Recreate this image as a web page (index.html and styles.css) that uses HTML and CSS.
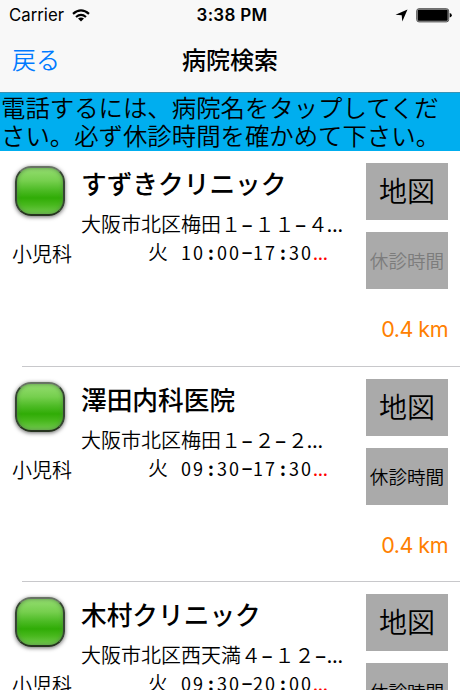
FILE: index.html
```html
<!DOCTYPE html>
<html lang="ja">
<head>
<meta charset="utf-8">
<title>病院検索</title>
<link rel="stylesheet" href="styles.css">
</head>
<body>
<header>
  <div class="status">
    <div class="carrier"><span>Carrier</span>
      <svg width="18" height="13" viewBox="0 0 18 13" fill="none" stroke="#000" stroke-width="2.2"><path d="M1 4.8Q9-2.1 17 4.8M4 8Q9 3.8 14 8"/><path d="M9 12.6L6 9.6Q9 7.3 12 9.6Z" fill="#000" stroke="none"/></svg>
    </div>
    <div class="clock">3:38 PM</div>
    <div class="indicators">
      <svg width="13" height="13" viewBox="0 0 13 13"><path d="M12.5.5L7.3 12.5L6.7 6.3L.5 5.8Z"/></svg>
      <svg width="36" height="15" viewBox="0 0 36 15"><rect x=".7" y=".7" width="32" height="13.2" rx="2.3" fill="#aaa" stroke="#555"/><rect x="1.8" y="1.8" width="29.8" height="11" rx="1"/><path d="M33.7 5Q35.8 5.5 35.8 7.3T33.7 9.6Z"/></svg>
    </div>
  </div>
  <nav>
    <a class="back">戻る</a>
    <h1>病院検索</h1>
  </nav>
</header>
<p class="notice">電話するには、病院名をタップしてくだ<br>さい。必ず休診時間を確かめて下さい。</p>
<main>
  <section class="row">
    <div class="kind"><i class="lamp"></i><span>小児科</span></div>
    <div class="info">
      <h2>すずきクリニック</h2>
      <p class="address">大阪市北区梅田１<b>−</b>１１<b>−</b>４<em>…</em></p>
      <p class="hours"><span class="day">火</span>10<b>:</b>00<b>−</b>17<b>:</b>30<em>…</em></p>
    </div>
    <div class="side"><div class="button map">地図</div><div class="button closed disabled">休診時間</div><div class="distance">0.4 km</div></div>
  </section>
  <section class="row">
    <div class="kind"><i class="lamp"></i><span>小児科</span></div>
    <div class="info">
      <h2>澤田内科医院</h2>
      <p class="address">大阪市北区梅田１<b>−</b>２<b>−</b>２<em>…</em></p>
      <p class="hours"><span class="day">火</span>09<b>:</b>30<b>−</b>17<b>:</b>30<em>…</em></p>
    </div>
    <div class="side"><div class="button map">地図</div><div class="button closed">休診時間</div><div class="distance">0.4 km</div></div>
  </section>
  <section class="row">
    <div class="kind"><i class="lamp"></i><span>小児科</span></div>
    <div class="info">
      <h2>木村クリニック</h2>
      <p class="address">大阪市北区西天満４<b>−</b>１２<b>−</b><em>…</em></p>
      <p class="hours"><span class="day">火</span>09<b>:</b>30<b>−</b>20<b>:</b>00<em>…</em></p>
    </div>
    <div class="side"><div class="button map">地図</div><div class="button closed">休診時間</div></div>
  </section>
</main>
</body>
</html>
```
FILE: styles.css
```css
* { box-sizing: border-box; margin: 0; padding: 0; }
html, body { height: 690px; overflow: hidden; }
body {
  width: 460px;
  display: flex;
  flex-direction: column;
  background: #fff;
  color: #000;
  font-family: "Noto Sans CJK JP", sans-serif;
}
header { height: 92px; flex: none; background: #f8f8f8; }
.status {
  height: 30px;
  display: grid;
  grid-template-columns: 1fr auto 1fr;
  align-items: center;
  padding: 0 8px 0 9px;
  font: 16.8px/30px Inter, sans-serif;
}
.carrier { display: flex; align-items: center; gap: 8px; }
.clock { font-weight: 600; font-size: 17px; letter-spacing: .3px; padding-left: 3px; }
.indicators { display: flex; justify-content: flex-end; align-items: center; gap: 8px; }
nav {
  height: 62px;
  display: grid;
  grid-template-columns: 1fr auto 1fr;
  align-items: center;
  padding: 0 12px 5px;
}
.back { color: #007aff; font-size: 24px; font-weight: 350; }
h1 { font-size: 24px; font-weight: 500; line-height: 36px; }
.notice {
  height: 59px;
  flex: none;
  background: #00aeef;
  border-top: 1px solid #3894b6;
  padding-left: 1px;
  font-size: 24.4px;
  font-weight: 350;
  line-height: 28px;
  white-space: nowrap;
}
.row {
  height: 215.6px;
  display: grid;
  grid-template-columns: 81px 1fr 82px;
  padding-right: 12px;
  background: linear-gradient(#c8c8cb, #c8c8cb) 22px 100% / 100% 1px no-repeat;
}
.kind { display: flex; flex-direction: column; padding: 15px 0 0 12px; }
.lamp {
  width: 50px;
  height: 50px;
  margin-left: 3px;
  border: 2px solid;
  border-color: #687364 #354532 #26331f;
  border-radius: 16px;
  background: linear-gradient(#94dd70 0%, #76cf4e 28%, #4dbb25 48%, #30ac06 65%, #48b81d 80%, #72ca4e 100%);
  box-shadow: 0 1px 4px #0009, inset 0 0 4px #528943;
}
.kind span { font-size: 20px; font-weight: 350; line-height: 30px; margin-top: 23px; }
.info { padding-top: 13px; white-space: nowrap; }
h2 { font-size: 25.7px; font-weight: 500; line-height: 38px; }
.address { font-size: 20px; font-weight: 350; line-height: 30px; margin-top: 7px; }
.address b {
  display: inline-block;
  width: 13.4px;
  font: 400 20px/20px Inter, sans-serif;
  text-align: center;
  text-indent: -1px;
}
.address em { font: 600 17px/20px Inter, sans-serif; margin-left: -1px; }
.hours {
  padding-left: 67px;
  font-size: 18px;
  font-weight: 400;
  line-height: 28px;
  letter-spacing: 2px;
  margin-top: -1px;
}
.day { display: inline-block; width: 33px; font-size: 20px; font-weight: 350; letter-spacing: 0; }
.hours b { display: inline-block; width: 12px; text-align: center; letter-spacing: 0; font-weight: 700; }
.hours em { color: #f00; font: 800 14px/20px Inter, sans-serif; letter-spacing: 0; }
.side { padding-top: 12px; }
.button {
  height: 57px;
  display: flex;
  align-items: center;
  justify-content: center;
  background: #aaa;
  white-space: nowrap;
}
.map { font-size: 28px; font-weight: 350; padding-bottom: 3px; }
.closed { margin-top: 12px; font-size: 18.6px; font-weight: 350; padding-bottom: 2px; }
.disabled { color: #7c7c7c; }
.distance { margin-top: 24px; text-align: right; color: #ff8000; font: 21.5px/32px Inter, sans-serif; letter-spacing: -.5px; }
```
